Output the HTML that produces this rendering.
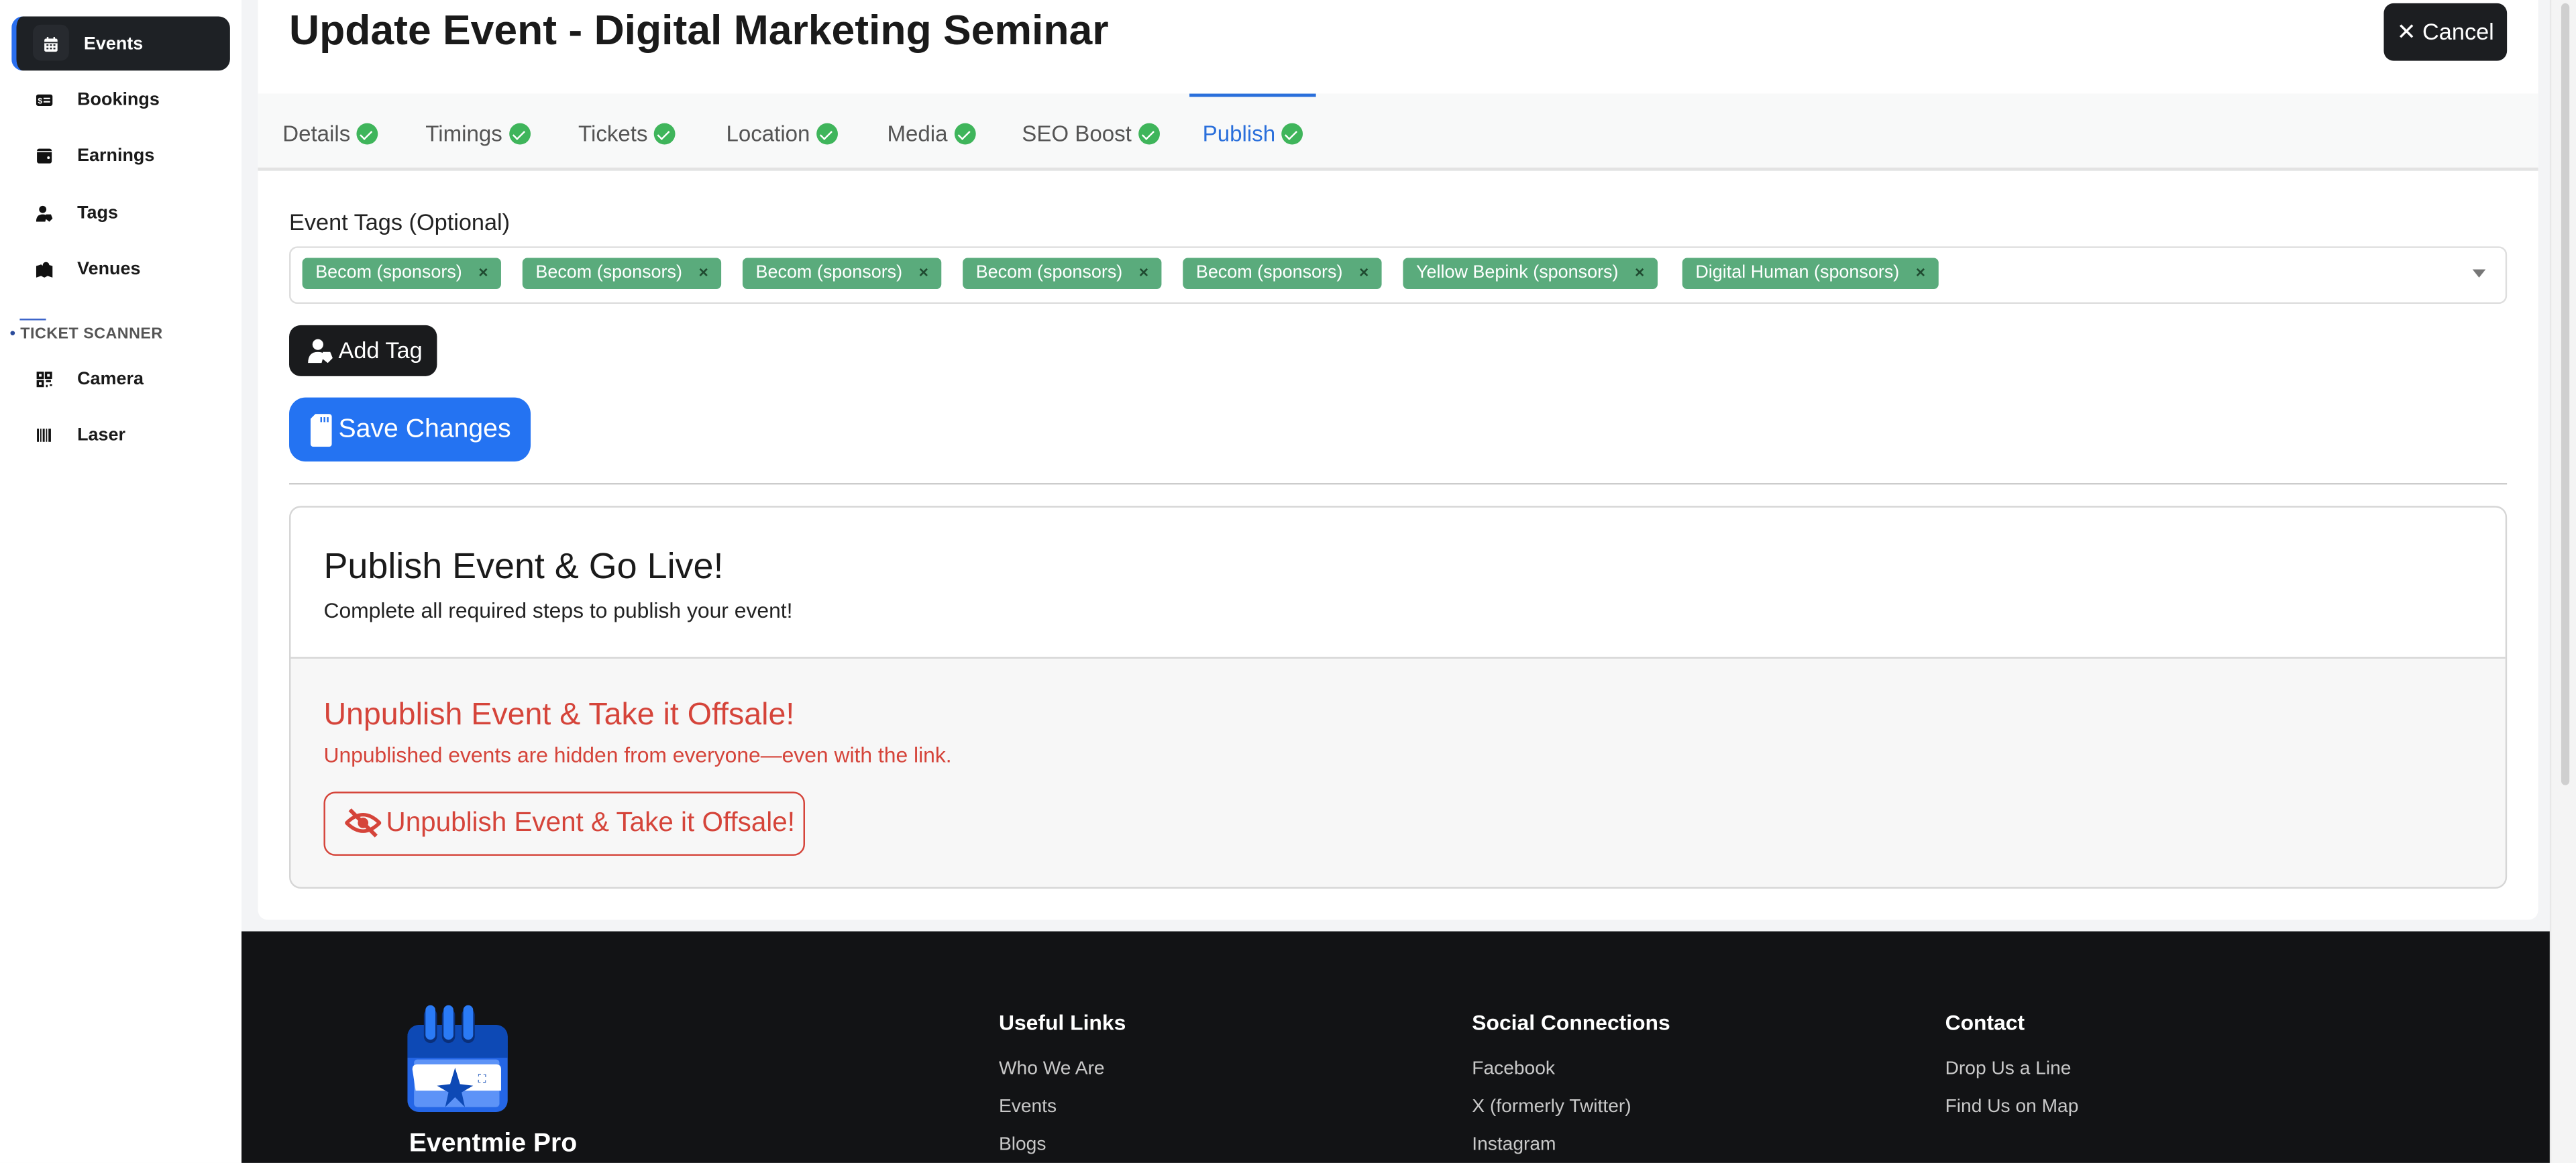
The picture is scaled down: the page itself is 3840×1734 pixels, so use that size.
<!DOCTYPE html>
<html><head><meta charset="utf-8"><style>
*{box-sizing:border-box;margin:0;padding:0}
html,body{width:3840px;height:1734px;overflow:hidden;background:#f3f4f6}
#w{position:absolute;left:0;top:0;width:1568px;height:708px;transform:scale(2.44898);transform-origin:0 0;font-family:"Liberation Sans",Arial,sans-serif;color:#212529;background:#f3f4f6}
.abs{position:absolute}
.side{left:0;top:0;width:147px;height:708px;background:#fff}
.nav{position:absolute;left:22px;font-size:11px;font-weight:bold;color:#1a1a1a;display:flex;align-items:center}
.nav .ic{width:10px;height:10px;margin-right:15px;display:inline-block}
.card{left:157px;top:0;width:1388px;height:560px;background:#fff;border-radius:0 0 6px 6px}
.tabs{left:157px;top:57px;width:1388px;height:47px;background:#f8f9f9;border-bottom:2px solid #e3e3e3}
.tab{position:absolute;top:74px;font-size:13.5px;color:#555;display:flex;align-items:center}
.ck{display:inline-block;width:13px;height:13px;border-radius:50%;background:#3fb55b;margin-left:4px;position:relative}
.ck:after{content:"";position:absolute;left:4px;top:2.5px;width:3px;height:5.5px;border:solid #fff;border-width:0 1.4px 1.4px 0;transform:rotate(45deg)}
.tag{position:absolute;top:157px;height:19px;background:#5aab7c;color:#fff;font-size:11px;border-radius:3px;padding:0 8px;line-height:19px;white-space:nowrap}
.tag b{color:#1f4a30;margin-left:10px;font-weight:bold;font-size:10px}
.fl{position:absolute;font-size:11.5px;color:#c8c8c8}
.fh{position:absolute;top:615px;font-size:13px;font-weight:bold;color:#fff}
</style></head><body><div id="w">
<div class="abs side"></div>
<div class="abs" style="left:7px;top:10px;width:133px;height:33px;background:#1e2125;border-radius:7px;border-left:3px solid #2a6ff0"></div>
<div class="abs" style="left:20px;top:15px;width:22px;height:22px;background:#272a2f;border-radius:5px"></div>
<div class="nav" style="top:21px;left:26px;color:#fff;font-weight:bold">
<svg class="ic" viewBox="0 0 10 10" style="margin-right:15px"><rect x="1" y="1.5" width="8" height="8" rx="1" fill="#fff"/><rect x="1" y="3.5" width="8" height="0.8" fill="#272a2f"/><g fill="#272a2f"><rect x="2.3" y="5" width="1.2" height="1"/><rect x="4.4" y="5" width="1.2" height="1"/><rect x="6.5" y="5" width="1.2" height="1"/><rect x="2.3" y="7" width="1.2" height="1"/><rect x="4.4" y="7" width="1.2" height="1"/><rect x="6.5" y="7" width="1.2" height="1"/></g><rect x="2.5" y="0.5" width="1" height="2" fill="#fff"/><rect x="6.5" y="0.5" width="1" height="2" fill="#fff"/></svg>Events</div>
<div class="nav" style="top:55px"><svg class="ic" viewBox="0 0 10 10"><rect x="0" y="1.5" width="10" height="7" rx="1.3" fill="#111"/><rect x="4.5" y="3.5" width="4" height="0.9" fill="#fff"/><rect x="4.5" y="5.5" width="4" height="0.9" fill="#fff"/><text x="1" y="7" font-size="5" fill="#fff">$</text></svg>Bookings</div>
<div class="nav" style="top:89px"><svg class="ic" viewBox="0 0 10 10"><rect x="0.5" y="0.5" width="9" height="9" rx="1.3" fill="#111"/><rect x="0.5" y="2" width="9" height="0.7" fill="#fff"/><circle cx="7.5" cy="6" r="0.8" fill="#fff"/></svg>Earnings</div>
<div class="nav" style="top:124px"><svg class="ic" viewBox="0 0 10 10"><circle cx="4" cy="2.5" r="2.2" fill="#111"/><path d="M0 10 Q0 5.5 4 5.5 Q6 5.5 6.5 6.5 L5.5 10Z" fill="#111"/><path d="M6 5.5 L9 5.5 L10 8 L8 10 L5.5 8Z" fill="#111"/></svg>Tags</div>
<div class="nav" style="top:158px"><svg class="ic" viewBox="0 0 10 10"><path d="M0 3 L3 2 L5 3.5 L7 2 L10 3 L10 10 L7 9 L5 10 L3 9 L0 10Z" fill="#111"/><circle cx="6" cy="2.5" r="2" fill="#111"/></svg>Venues</div>
<div class="abs" style="left:12px;top:194px;width:16px;height:1px;background:#3a63c8"></div>
<div class="abs" style="left:6px;top:198px;font-size:9.5px;font-weight:bold;color:#555;letter-spacing:.2px"><span style="color:#2a4a9a">•</span> TICKET SCANNER</div>
<div class="nav" style="top:225px"><svg class="ic" viewBox="0 0 10 10" fill="none" stroke="#111" stroke-width="1.4"><rect x="1" y="1" width="3" height="3"/><rect x="6" y="1" width="3" height="3"/><rect x="1" y="6" width="3" height="3"/><path d="M6 6h3M6 9h1M9 8v1"/></svg>Camera</div>
<div class="nav" style="top:259px"><svg class="ic" viewBox="0 0 10 10" fill="#111"><rect x="0.5" y="1" width="1.2" height="8"/><rect x="2.5" y="1" width="0.7" height="8"/><rect x="4" y="1" width="1.2" height="8"/><rect x="6" y="1" width="0.7" height="8"/><rect x="7.5" y="1" width="1.5" height="8"/></svg>Laser</div>

<div class="abs card"></div>
<div class="abs" style="left:176px;top:5px;font-size:25.5px;font-weight:bold;color:#1a1a1a">Update Event - Digital Marketing Seminar</div>
<div class="abs" style="left:1451px;top:2px;width:75px;height:35px;background:#1c1e21;border-radius:6px;color:#fff;font-size:14px;line-height:35px;text-align:center">✕ Cancel</div>
<div class="abs tabs"></div>
<div class="abs" style="left:724px;top:57px;width:77px;height:2px;background:#2a6fdb"></div>
<div class="tab" style="left:172px">Details<span class="ck"></span></div>
<div class="tab" style="left:259px">Timings<span class="ck"></span></div>
<div class="tab" style="left:352px">Tickets<span class="ck"></span></div>
<div class="tab" style="left:442px">Location<span class="ck"></span></div>
<div class="tab" style="left:540px">Media<span class="ck"></span></div>
<div class="tab" style="left:622px">SEO Boost<span class="ck"></span></div>
<div class="tab" style="left:732px;color:#2a6fdb">Publish<span class="ck"></span></div>

<div class="abs" style="left:176px;top:127px;font-size:14px;color:#222">Event Tags (Optional)</div>
<div class="abs" style="left:176px;top:150px;width:1350px;height:35px;border:1px solid #dedede;border-radius:5px;background:#fff"></div>
<div class="tag" style="left:184px">Becom (sponsors)<b>×</b></div>
<div class="tag" style="left:318px">Becom (sponsors)<b>×</b></div>
<div class="tag" style="left:452px">Becom (sponsors)<b>×</b></div>
<div class="tag" style="left:586px">Becom (sponsors)<b>×</b></div>
<div class="tag" style="left:720px">Becom (sponsors)<b>×</b></div>
<div class="tag" style="left:854px">Yellow Bepink (sponsors)<b>×</b></div>
<div class="tag" style="left:1024px">Digital Human (sponsors)<b>×</b></div>
<div class="abs" style="left:1505px;top:164px;width:0;height:0;border-left:4px solid transparent;border-right:4px solid transparent;border-top:5px solid #777"></div>

<div class="abs" style="left:176px;top:198px;width:90px;height:31px;background:#1a1b1d;border-radius:7px;color:#fff;font-size:14px;line-height:31px;padding-left:30px">Add Tag</div>
<svg class="abs" style="left:186px;top:206px" width="18" height="15" viewBox="0 0 10 10"><circle cx="4" cy="2.5" r="2.2" fill="#fff"/><path d="M0 10 Q0 5.5 4 5.5 Q6 5.5 6.5 6.5 L5.5 10Z" fill="#fff"/><path d="M6 5.5 L9 5.5 L10 8 L8 10 L5.5 8Z" fill="#fff"/></svg>
<div class="abs" style="left:176px;top:242px;width:147px;height:39px;background:#2473f2;border-radius:10px;color:#fff;font-size:16px;line-height:39px;padding-left:30px">Save Changes</div>
<svg class="abs" style="left:189px;top:252px" width="13" height="20" viewBox="0 0 13 20"><path d="M3 0H11Q13 0 13 2V18Q13 20 11 20H2Q0 20 0 18V3Z" fill="#fff"/><rect x="6" y="2" width="1" height="3" fill="#2473f2"/><rect x="8" y="2" width="1" height="3" fill="#2473f2"/><rect x="10" y="2" width="1" height="3" fill="#2473f2"/></svg>
<div class="abs" style="left:176px;top:294px;width:1350px;height:1px;background:#ccc"></div>

<div class="abs" style="left:176px;top:308px;width:1350px;height:233px;border:1px solid #d6d6d6;border-radius:7px;background:#f7f7f7;overflow:hidden">
<div style="height:92px;background:#fff;border-bottom:1px solid #d6d6d6"></div></div>
<div class="abs" style="left:197px;top:332px;font-size:22px;color:#1a1a1a">Publish Event &amp; Go Live!</div>
<div class="abs" style="left:197px;top:364px;font-size:13px;color:#222">Complete all required steps to publish your event!</div>
<div class="abs" style="left:197px;top:425px;font-size:19px;color:#d5443a">Unpublish Event &amp; Take it Offsale!</div>
<div class="abs" style="left:197px;top:452px;font-size:13px;color:#d5443a">Unpublished events are hidden from everyone—even with the link.</div>
<div class="abs" style="left:197px;top:482px;width:293px;height:39px;border:1px solid #d5443a;border-radius:7px;color:#d5443a;font-size:16.5px;line-height:37px;padding-left:37px">Unpublish Event &amp; Take it Offsale!</div>
<svg class="abs" style="left:210px;top:492px" width="22" height="18" viewBox="0 0 22 18"><path d="M1 9 Q11 -1 21 9 Q11 19 1 9Z" fill="none" stroke="#d5443a" stroke-width="2.2"/><circle cx="11" cy="9" r="3.2" fill="#d5443a"/><path d="M3 1 L19 17" stroke="#d5443a" stroke-width="2.4"/></svg>

<div class="abs" style="left:1552px;top:0;width:16px;height:708px;background:#f4f4f4;border-left:1px solid #e8e8e8"></div>
<div class="abs" style="left:1559px;top:2px;width:5px;height:476px;background:#cfcfcf;border-radius:3px"></div>

<div class="abs" style="left:147px;top:567px;width:1405px;height:141px;background:#121315"></div>
<svg class="abs" style="left:248px;top:611px" width="62" height="68" viewBox="0 0 62 66">
<rect x="0" y="12" width="61" height="53" rx="7" fill="#2466e6"/><rect x="0" y="12" width="61" height="20" rx="7" fill="#0d49b5"/><rect x="0" y="25" width="61" height="7" fill="#0d49b5"/>
<g fill="#0a2f7a"><rect x="10" y="2" width="8" height="21" rx="4"/><rect x="21" y="2" width="8" height="21" rx="4"/><rect x="33" y="2" width="8" height="21" rx="4"/></g>
<g fill="#2a7af5"><rect x="11" y="0" width="6" height="21" rx="3"/><rect x="22" y="0" width="6" height="21" rx="3"/><rect x="34" y="0" width="6" height="21" rx="3"/></g>
<rect x="4" y="33" width="52" height="29" rx="2" fill="#5d93f7"/>
<path d="M3 39 Q3 36 6 36 H54 Q57 36 57 39 V52 H5Z" fill="#fff"/>
<path d="M29 38 L32 48 L40 49 L33 53 L35 62 L29 56 L23 62 L25 53 L18 49 L26 48Z" fill="#0d49b5"/>
<text x="43" y="47" font-size="7" fill="#0d49b5">⛶</text>
</svg>
<div class="abs" style="left:249px;top:688px;font-size:16px;font-weight:bold;color:#fff">Eventmie Pro</div>
<div class="fh" style="left:608px">Useful Links</div>
<div class="fl" style="left:608px;top:645px">Who We Are</div>
<div class="fl" style="left:608px;top:668px">Events</div>
<div class="fl" style="left:608px;top:691px">Blogs</div>
<div class="fh" style="left:896px">Social Connections</div>
<div class="fl" style="left:896px;top:645px">Facebook</div>
<div class="fl" style="left:896px;top:668px">X (formerly Twitter)</div>
<div class="fl" style="left:896px;top:691px">Instagram</div>
<div class="fh" style="left:1184px">Contact</div>
<div class="fl" style="left:1184px;top:645px">Drop Us a Line</div>
<div class="fl" style="left:1184px;top:668px">Find Us on Map</div>
</div></body></html>
